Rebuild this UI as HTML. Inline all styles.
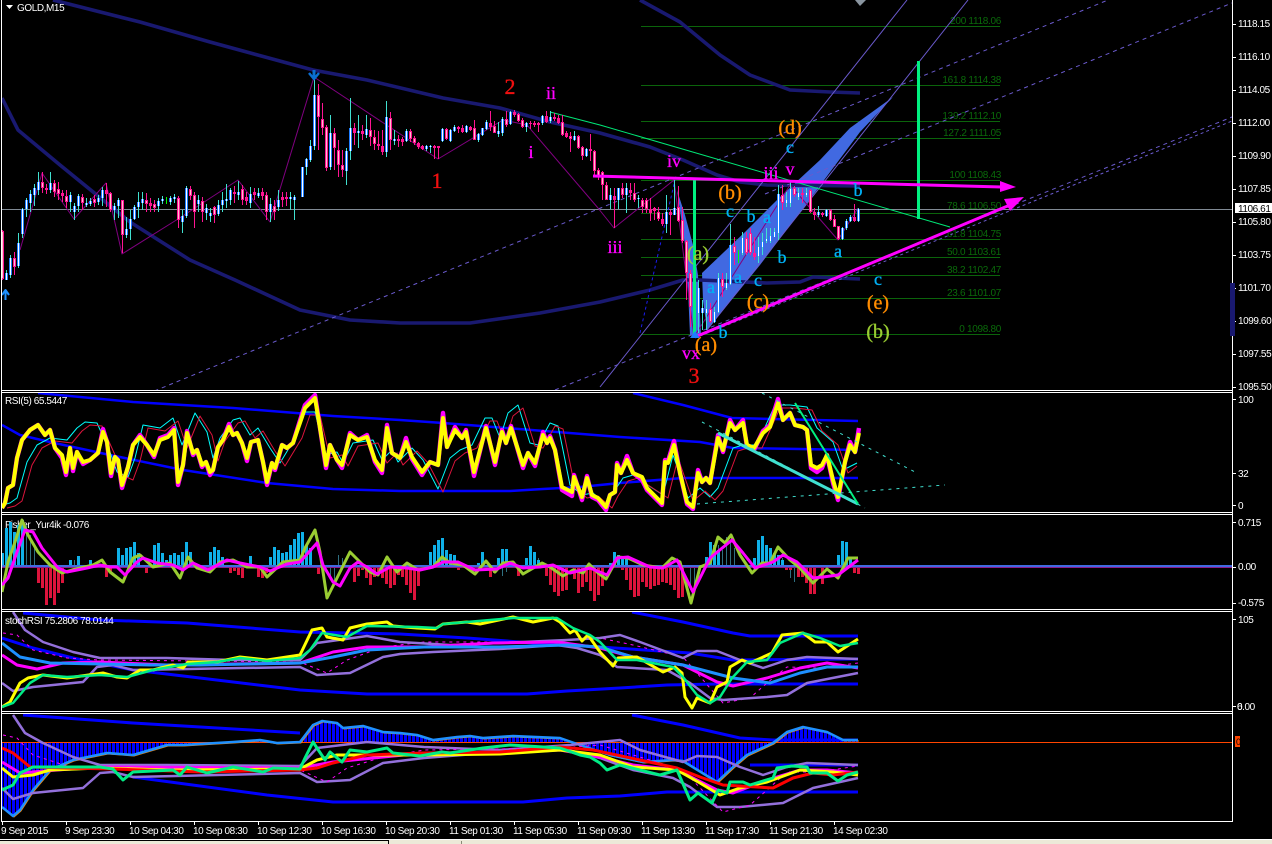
<!DOCTYPE html>
<html><head><meta charset="utf-8"><title>GOLD,M15</title>
<style>
html,body{margin:0;padding:0;background:#000;width:1272px;height:844px;overflow:hidden}
svg{display:block}
text{font-family:"Liberation Sans",sans-serif}
.ax text,.t{font-size:10px;letter-spacing:-.42px;fill:#fff}
.fib text{font-size:10px;letter-spacing:-.3px;fill:#0a6a0a;text-anchor:end}
.l text{font-family:"Liberation Serif",serif;text-anchor:middle;font-size:18px;stroke-width:.35px}
.p text{font-size:20px}
polyline,path{fill:none;stroke-linejoin:round}
</style></head><body>
<svg width="1272" height="844" viewBox="0 0 1272 844" xmlns="http://www.w3.org/2000/svg">
<defs>
<pattern id="h" width="4" height="10" patternUnits="userSpaceOnUse" x="0"><rect width="3" height="10" fill="#0000ff"/></pattern>
<clipPath id="c0"><rect x="2" y="0" width="1230" height="390"/></clipPath>
<clipPath id="c1"><rect x="2" y="393" width="1230" height="119"/></clipPath>
<clipPath id="c2"><rect x="2" y="515" width="1230" height="94"/></clipPath>
<clipPath id="c3"><rect x="2" y="612" width="1230" height="99"/></clipPath>
<clipPath id="c4"><rect x="2" y="714" width="1230" height="107"/></clipPath>
<path id="bu" d="M6.5 273V280M10.5 258V275M18.5 243V266M22.5 209V234M26.5 200V209M30.5 194V203M34.5 188V195M38.5 182V190M50.5 183V190M70.5 195V202M74.5 206V212M78.5 196V206M86.5 203V205M90.5 201V204M98.5 198V202M102.5 190V198M114.5 206V210M118.5 200V206M126.5 229V235M130.5 219V229M134.5 207V219M138.5 202V207M142.5 199V203M158.5 201V206M162.5 199V201M170.5 198V202M174.5 197V199M182.5 216V222M186.5 188V216M198.5 200V204M206.5 208V213M210.5 213V216M218.5 205V214M222.5 200V205M226.5 199V201M230.5 190V200M238.5 192V195M250.5 194V203M258.5 193V196M270.5 204V212M278.5 200V207M290.5 197V199M294.5 197V200M302.5 167V197M306.5 159V167M310.5 146V160M314.5 95V146M330.5 133V167M346.5 151V171M350.5 128V151M358.5 131V133M366.5 129V135M386.5 117V152M394.5 139V141M406.5 131V141M426.5 146V149M430.5 146V147M442.5 129V141M450.5 130V141M454.5 127V131M466.5 126V132M478.5 134V140M482.5 128V135M486.5 122V129M498.5 131V134M502.5 119V133M510.5 112V124M526.5 123V127M542.5 116V123M550.5 117V121M574.5 136V140M586.5 149V156M610.5 195V200M618.5 188V200M626.5 188V195M638.5 198V199M666.5 212V224M674.5 208V215M698.5 288V313M702.5 308V313M706.5 309V313M714.5 312V322M718.5 278V312M726.5 283V288M730.5 245V284M742.5 238V253M758.5 247V256M762.5 242V247M766.5 239V241M770.5 236V241M774.5 232V237M778.5 194V233M786.5 200V203M790.5 189V203M798.5 193V197M806.5 193V195M818.5 212V215M826.5 210V216M842.5 228V239M846.5 221V228M850.5 217V221M858.5 209V221"/>
</defs>
<rect width="1272" height="844" fill="#000"/>

<!-- MAIN -->
<g clip-path="url(#c0)">
<line x1="1" y1="209.5" x2="1232" y2="209.5" stroke="#808a94"/>
<g stroke="#0b640b" stroke-width="1" shape-rendering="crispEdges">
<path d="M641 26.5H1000M641 85.5H1000M641 121.5H1000M641 138.5H1000M641 180.5H1000M641 213.5H1000M641 239.5H1000M641 257.5H1000M641 275.5H1000M641 298.5H1000M641 334.5H1000"/>
</g>
<g class="fib">
<text x="1001" y="24">200 1118.06</text><text x="1001" y="83">161.8 1114.38</text><text x="1001" y="119">139.2 1112.10</text><text x="1001" y="136">127.2 1111.05</text><text x="1001" y="178">100 1108.43</text><text x="1001" y="209">78.6 1106.50</text><text x="1001" y="237">61.8 1104.75</text><text x="1001" y="255">50.0 1103.61</text><text x="1001" y="273">38.2 1102.47</text><text x="1001" y="296">23.6 1101.07</text><text x="1001" y="332">0 1098.80</text>
</g>
<polygon points="702,273 745,232 780,197 820,160 850,128 893,97 860,132 813,195 760,265 707,330 703,300" fill="#4169e1"/>
<polygon points="677,190 685,215 693,245 698,275 701,335 690,335 688,290 685,245" fill="#4169e1"/>
<!-- navy -->
<g stroke="#191970" stroke-width="3.6">
<polyline points="53,0 140,22 210,42 313,70 367,80 443,98 500,108 550,122 600,133 650,147 683,160 717,175 740,182 767,185 860,186"/>
<polyline points="2,98 18,130 60,165 130,222 190,260 235,280 300,310 350,320 400,323 470,323 540,313 600,302 650,290 683,280 700,280 767,283 800,282 813,277 860,279"/>
<polyline points="640,0 680,22 720,55 750,75 790,90 830,92 860,93"/>
</g>
<!-- dashed trend -->
<g stroke="#6a5acd" stroke-width="1">
<line x1="147" y1="394" x2="1108" y2="0" stroke-dasharray="4 4"/>
<line x1="765" y1="194" x2="1232" y2="3" stroke-dasharray="4 4"/>
<line x1="555" y1="390" x2="1232" y2="117" stroke-dasharray="4 4"/>
<line x1="700" y1="336" x2="1232" y2="121" stroke-dasharray="3 3"/>
<line x1="600" y1="387" x2="907" y2="0"/>
<line x1="707" y1="330" x2="968" y2="0"/>
</g>
<line x1="640" y1="333" x2="675" y2="180" stroke="#1c1cf0" stroke-dasharray="3 3"/>
<!-- zigzag -->
<polyline stroke="#800080" points="20,250 42,173 74,219 106,183 122,254 178,219 238,180 270,222 314,77 438,159 503,120 527,125 598,208 614,228 674,180 694,337 790,185 838,240 858,208"/>
<polyline stroke="#00e676" points="550,112 600,125 950,227"/>
<!-- candles -->
<g shape-rendering="crispEdges">
<path stroke="#40e0d0" d="M6.5 270V280M10.5 255V278M18.5 233V268M22.5 208V238M26.5 198V217M30.5 190V212M34.5 184V206M38.5 172V195M50.5 172V193M70.5 192V212M74.5 203V220M78.5 194V212M86.5 198V207M90.5 198V206M98.5 195V205M102.5 187V206M114.5 203V220M118.5 198V218M126.5 217V238M130.5 210V240M134.5 205V220M138.5 192V218M142.5 192V210M158.5 198V212M162.5 196V204M170.5 196V205M174.5 194V203M182.5 210V233M186.5 186V218M198.5 195V212M206.5 204V220M210.5 208V222M218.5 200V216M222.5 192V212M226.5 184V208M230.5 188V205M238.5 181V200M250.5 187V208M258.5 188V198M270.5 198V222M278.5 190V211M290.5 192V210M294.5 195V220M302.5 167V197M306.5 158V175M310.5 140V162M314.5 75V150M330.5 115V170M346.5 148V185M350.5 98V160M358.5 115V148M366.5 115V138M386.5 101V157M394.5 130V145M406.5 129V142M426.5 145V151M430.5 145V153M442.5 128V142M450.5 129V142M454.5 125V132M466.5 125V133M478.5 133V142M482.5 128V136M486.5 120V130M498.5 122V137M502.5 117V136M510.5 111V125M526.5 122V132M542.5 115V125M550.5 111V123M574.5 131V141M586.5 148V157M610.5 188V209M618.5 188V209M626.5 183V213M638.5 195V208M666.5 195V233M674.5 180V215M698.5 280V333M702.5 300V330M706.5 300V330M714.5 307V323M718.5 273V313M726.5 273V290M730.5 224V285M742.5 232V255M758.5 237V263M762.5 233V255M766.5 228V243M770.5 228V243M774.5 228V237M778.5 185V240M786.5 192V207M790.5 180V207M798.5 188V200M806.5 188V197M818.5 206V217M826.5 209V217M842.5 227V240M846.5 219V230M850.5 215V222M858.5 208V222"/>
<path stroke="#ff1493" d="M2.5 230V280M14.5 252V275M42.5 172V193M46.5 184V194M54.5 180V197M58.5 182V200M62.5 190V202M66.5 190V208M82.5 194V210M94.5 195V207M106.5 183V207M110.5 192V212M122.5 200V253M146.5 193V212M150.5 198V212M154.5 200V212M178.5 196V228M190.5 186V200M194.5 192V228M202.5 197V222M214.5 206V223M234.5 186V203M242.5 185V205M246.5 192V205M254.5 188V200M262.5 188V200M266.5 192V220M274.5 200V220M282.5 192V207M286.5 192V206M318.5 84V150M322.5 103V135M326.5 125V171M334.5 128V170M338.5 140V177M342.5 150V177M354.5 123V145M362.5 125V140M370.5 118V146M374.5 130V150M378.5 131V150M382.5 130V155M390.5 112V150M398.5 135V147M402.5 137V146M410.5 129V142M414.5 136V145M418.5 142V149M422.5 145V150M434.5 145V159M438.5 146V159M446.5 128V140M458.5 126V133M462.5 125V133M470.5 126V131M474.5 120V140M490.5 111V131M494.5 121V133M506.5 111V127M514.5 110V117M518.5 113V122M522.5 118V128M530.5 121V129M534.5 121V127M538.5 122V132M546.5 111V123M554.5 113V121M558.5 115V124M562.5 115V136M566.5 131V138M570.5 132V152M578.5 135V149M582.5 146V160M590.5 134V161M594.5 150V175M598.5 168V180M602.5 171V200M606.5 182V200M614.5 188V228M622.5 183V198M630.5 183V200M634.5 183V202M642.5 198V213M646.5 198V213M650.5 198V221M654.5 207V220M658.5 207V221M662.5 213V226M670.5 210V235M678.5 186V222M682.5 207V243M686.5 240V300M690.5 270V327M694.5 283V337M710.5 303V323M722.5 273V297M734.5 237V265M746.5 232V255M750.5 228V255M754.5 237V260M782.5 185V210M794.5 186V197M802.5 188V203M810.5 189V213M814.5 208V220M822.5 212V217M830.5 209V221M834.5 215V227M838.5 226V240M854.5 204V222"/>
<path stroke="#00ff00" d="M166.5 197V204M738.5 250V263"/>
<use href="#bu" stroke="#1e7dff" stroke-width="3"/>
<use href="#bu" stroke="#ffffff" stroke-width="1"/>
<path stroke="#ff1493" stroke-width="3" d="M2.5 231V279M14.5 258V267M42.5 182V188M46.5 188V190M54.5 183V192M58.5 189V194M62.5 193V196M66.5 196V202M82.5 197V203M94.5 199V203M106.5 190V194M110.5 193V210M122.5 200V235M146.5 200V204M150.5 203V206M154.5 204V208M178.5 198V220M190.5 189V196M194.5 195V212M202.5 201V212M214.5 207V215M234.5 192V194M242.5 189V200M246.5 197V201M254.5 192V195M262.5 192V196M266.5 195V212M274.5 206V212M282.5 197V200M286.5 197V199M318.5 95V117M322.5 119V128M326.5 127V168M334.5 133V148M338.5 150V165M342.5 165V170M354.5 128V133M362.5 131V134M370.5 130V137M374.5 137V144M378.5 144V146M382.5 146V152M390.5 118V140M398.5 139V141M402.5 139V142M410.5 131V139M414.5 138V143M418.5 143V147M422.5 146V149M434.5 146V148M438.5 146V148M446.5 129V139M458.5 127V129M462.5 128V132M470.5 127V130M474.5 128V140M490.5 123V127M494.5 126V133M506.5 119V125M514.5 112V115M518.5 114V121M522.5 120V127M530.5 123V124M534.5 123V125M538.5 123V125M546.5 116V122M554.5 117V119M558.5 118V123M562.5 122V135M566.5 133V137M570.5 136V139M578.5 136V148M582.5 147V156M590.5 149V151M594.5 151V171M598.5 170V177M602.5 172V185M606.5 185V200M614.5 196V200M622.5 188V195M630.5 190V193M634.5 193V200M642.5 200V207M646.5 200V209M650.5 209V213M654.5 208V211M658.5 212V219M662.5 219V224M670.5 212V215M678.5 207V221M682.5 220V241M686.5 241V273M690.5 273V307M694.5 307V313M710.5 309V322M722.5 279V287M734.5 246V253M746.5 238V253M750.5 233V253M754.5 253V257M782.5 195V203M794.5 188V195M802.5 193V195M810.5 190V212M814.5 212V215M822.5 213V215M830.5 210V220M834.5 219V227M838.5 226V239M854.5 217V221"/>
<path stroke="#ffc0cb" stroke-width="1" d="M2.5 232V278M14.5 259V266M42.5 183V187M54.5 184V191M58.5 190V193M66.5 197V201M82.5 198V202M94.5 200V202M110.5 194V209M122.5 201V234M146.5 201V203M154.5 205V207M178.5 199V219M190.5 190V195M194.5 196V211M202.5 202V211M214.5 208V214M242.5 190V199M266.5 196V211M274.5 207V211M318.5 96V116M322.5 120V127M326.5 128V167M334.5 134V147M338.5 151V164M342.5 166V169M370.5 131V136M374.5 138V143M390.5 119V139M410.5 132V138M414.5 139V142M446.5 130V138M474.5 129V139M494.5 127V132M506.5 120V124M518.5 115V120M522.5 121V126M562.5 123V134M570.5 137V138M578.5 137V147M582.5 148V155M594.5 152V170M598.5 171V176M602.5 173V184M606.5 186V199M622.5 189V194M634.5 194V199M642.5 201V206M646.5 201V208M658.5 213V218M678.5 208V220M682.5 221V240M686.5 242V272M690.5 274V306M710.5 310V321M722.5 280V286M734.5 247V252M746.5 239V252M750.5 234V252M782.5 196V202M794.5 189V194M810.5 191V211M830.5 211V219M834.5 220V226M838.5 227V238"/>
</g>
<!-- green bars & magenta arrows -->
<g stroke="#00f080" stroke-width="3"><line x1="694.5" y1="180" x2="694.5" y2="335"/><line x1="918.5" y1="61" x2="918.5" y2="219"/></g>
<g stroke="#ff00ff" stroke-width="3"><line x1="593" y1="176" x2="1002" y2="187"/><line x1="695" y1="337" x2="1010" y2="205"/></g>
<polygon points="1000,181 1016,187 1000,192" fill="#ff00ff"/>
<polygon points="1004,199 1024,197 1010,211" fill="#ff00ff"/>
<polygon points="855,0 866,0 860,6" fill="#8a95a0"/>
<!-- arrows -->
<path d="M314 70V79" stroke="#0a6ed1" stroke-width="3"/><path d="M309 73L314 79L319 73" stroke="#0a6ed1" stroke-width="2.5"/>
<path d="M5.5 300V290M2 295L5.5 290L9 295" stroke="#1e90ff" stroke-width="2"/>
<polygon points="690,338 695,331 700,338" fill="#1e7dff"/>
</g>
<!-- wave labels -->
<g class="l">
<g fill="#f01010" stroke="#f01010"><text x="437" y="188" style="font-size:22px">1</text><text x="510" y="94" style="font-size:22px">2</text><text x="694" y="383" style="font-size:22px">3</text></g>
<g fill="#ff00ff" stroke="#ff00ff"><text x="531" y="158">i</text><text x="551" y="99">ii</text><text x="615" y="253">iii</text><text x="674" y="167">iv</text><text x="790" y="175">v</text><text x="771" y="179">iii</text><text x="691" y="359">vx</text></g>
<g fill="#00b0f5" stroke="#00b0f5"><text x="790" y="153">c</text><text x="858" y="196">b</text><text x="838" y="257">a</text><text x="878" y="285">c</text><text x="782" y="263">b</text><text x="758" y="286">c</text><text x="767" y="223">a</text><text x="751" y="222">b</text><text x="730" y="217">c</text><text x="738" y="283">a</text><text x="711" y="293">a</text><text x="723" y="338">b</text></g>
<g fill="#ff8c00" stroke="#ff8c00" class="p"><text x="790" y="134">(d)</text><text x="730" y="199">(b)</text><text x="758" y="308">(c)</text><text x="878" y="309">(e)</text><text x="706" y="351">(a)</text></g>
<g fill="#9acd32" stroke="#9acd32" class="p"><text x="698" y="260">(a)</text><text x="878" y="338">(b)</text></g>
</g>
<polygon points="6,5 13,5 9.5,9" fill="#fff"/>
<text x="17" y="11" class="t">GOLD,M15</text>

<!-- RSI -->
<g clip-path="url(#c1)">
<g stroke="#0000ff" stroke-width="2.5">
<polyline points="38,393 133,402 233,408 333,416 400,420 443,423 620,437 700,442 733,448 800,449 858,450"/>
<polyline points="633,393 683,405 732,418 858,421"/>
<polyline points="2,425 20,435 50,442 110,455 183,470 267,483 333,489 400,491 510,491 543,489 580,487 620,483 683,478 858,478"/>
</g>
<polyline stroke="#00ffff" points="2,505 10,503 17,498 27,462 37,445 50,438 67,440 77,428 85,422 97,423 110,452 117,472 128,477 135,458 143,425 160,428 173,418 182,445 195,413 207,432 213,458 220,438 233,420 240,418 250,435 258,428 270,448 280,463 297,435 305,412 315,412 325,455 337,452 343,463 353,443 373,440 382,460 392,450 398,462 412,448 423,460 438,489 450,458 460,450 472,445 485,418 492,418 500,438 508,413 518,405 530,443 538,445 550,423 558,426 563,450 570,485 582,495 593,493 607,505 613,493 623,478 633,475 643,482 663,495 673,455 688,498 700,488 710,497 718,488 733,448 743,445 757,445 775,405 790,405 807,407 817,428 833,442 843,470 857,463"/>
<polyline stroke="#dc143c" transform="translate(5,3)" points="2,505 10,503 17,498 27,462 37,445 50,438 67,440 77,428 85,422 97,423 110,452 117,472 128,477 135,458 143,425 160,428 173,418 182,445 195,413 207,432 213,458 220,438 233,420 240,418 250,435 258,428 270,448 280,463 297,435 305,412 315,412 325,455 337,452 343,463 353,443 373,440 382,460 392,450 398,462 412,448 423,460 438,489 450,458 460,450 472,445 485,418 492,418 500,438 508,413 518,405 530,443 538,445 550,423 558,426 563,450 570,485 582,495 593,493 607,505 613,493 623,478 633,475 643,482 663,495 673,455 688,498 700,488 710,497 718,488 733,448 743,445 757,445 775,405 790,405 807,407 817,428 833,442 843,470 852,463"/>
<polyline stroke="#ff00ff" stroke-width="4.4" points="2,508 5,503 8,488 13,485 17,458 22,440 30,430 38,425 45,435 50,430 55,448 62,458 66,475 70,448 73,471 77,452 83,464 90,460 98,453 103,429 107,442 111,476 115,457 118,460 122,488 128,467 133,445 140,435 147,445 154,457 160,438 168,435 174,428 178,485 183,465 187,431 193,455 197,450 202,467 206,462 210,475 213,470 218,447 223,440 229,424 233,435 237,433 242,443 247,461 251,442 258,440 263,462 267,485 272,463 275,470 282,445 287,448 293,443 302,414 305,405 315,395 320,428 326,468 330,445 337,460 342,468 350,433 358,440 367,435 375,462 382,473 387,425 392,453 400,458 406,438 412,459 422,475 430,462 438,465 443,413 447,447 455,427 462,438 466,430 474,476 486,426 495,465 502,430 506,443 511,426 523,468 528,453 535,466 543,432 547,443 550,436 555,450 562,490 572,496 574,475 582,500 587,476 592,497 598,500 606,510 610,495 615,492 617,463 621,473 627,456 633,473 642,480 647,490 662,505 665,460 668,461 674,441 680,473 687,504 693,509 698,470 702,482 706,478 710,483 718,435 723,452 730,420 735,430 743,420 747,447 754,450 763,431 770,425 778,399 783,420 790,413 795,425 803,427 807,430 811,468 817,472 822,468 827,455 833,483 838,500 845,462 850,442 855,452 859,428"/>
<polyline stroke="#ffff00" stroke-width="4" points="2,508 5,503 8,488 13,485 17,458 22,440 30,430 38,425 45,435 50,430 55,448 62,455 66,472 70,448 73,468 77,452 83,462 90,460 98,453 103,432 107,442 111,473 115,457 118,460 122,485 128,467 133,445 140,437 147,445 154,455 160,440 168,437 174,430 178,482 183,465 187,433 193,453 197,450 202,465 206,462 210,472 213,470 218,447 223,440 229,427 233,435 237,433 242,443 247,458 251,442 258,440 263,462 267,482 272,463 275,468 282,445 287,448 293,443 302,417 305,408 315,398 320,428 326,465 330,445 337,460 342,465 350,435 358,440 367,437 375,460 382,470 387,428 392,453 400,458 406,442 412,457 422,472 430,462 438,465 443,418 447,447 455,430 462,438 466,432 474,472 486,428 495,462 502,432 506,443 511,428 523,465 528,453 535,463 543,435 547,443 550,438 555,450 562,487 572,492 574,477 582,497 587,478 592,495 598,498 606,507 610,495 615,492 617,465 621,473 627,460 633,473 642,477 647,488 662,503 665,462 668,463 674,445 680,473 687,502 693,507 698,473 702,482 706,478 710,483 718,438 723,450 730,423 735,430 743,423 747,445 754,448 763,433 770,427 778,403 783,420 790,413 795,425 803,427 807,430 811,465 817,468 822,465 827,455 833,480 838,497 845,462 850,445 855,452 859,433"/>
<line x1="718" y1="433" x2="858" y2="504" stroke="#40e0d0" stroke-width="3"/>
<line x1="795" y1="403" x2="858" y2="504" stroke="#00f080" stroke-width="2"/>
<g stroke="#40e0d0" stroke-dasharray="3 5"><line x1="702" y1="422" x2="865" y2="508"/><line x1="762" y1="393" x2="917" y2="473"/><line x1="697" y1="504" x2="945" y2="485"/></g>
<text x="5" y="404" class="t">RSI(5) 65.5447</text>
</g>

<!-- FISHER -->
<g clip-path="url(#c2)">
<text x="5" y="528" class="t">Fisher_Yur4ik -0.076</text>
<path stroke="#2f6f80" d="M26.5 566V525M30.5 566V535M34.5 566V548M74.5 566V560M338.5 566V555M342.5 566V558M530.5 566V555M534.5 566V552M538.5 566V558M718.5 566V545M722.5 566V550M726.5 566V537M730.5 566V540M734.5 566V548M782.5 566V558M790.5 566V578M794.5 566V582M330.5 566V580M334.5 566V585M690.5 566V590M694.5 566V585M698.5 566V578M502.5 566V576M506.5 566V572M610.5 566V572"/>
<path stroke="#0fb0e8" stroke-width="3" shape-rendering="crispEdges" d="M2.5 566V553M6.5 566V528M10.5 566V522M14.5 566V532M18.5 566V525M22.5 566V520M70.5 566V560M78.5 566V556M90.5 566V560M118.5 566V548M122.5 566V555M126.5 566V548M130.5 566V547M134.5 566V542M138.5 566V553M154.5 566V545M158.5 566V543M162.5 566V553M166.5 566V560M170.5 566V555M174.5 566V553M178.5 566V555M182.5 566V552M186.5 566V542M190.5 566V552M210.5 566V552M214.5 566V547M218.5 566V550M222.5 566V557M250.5 566V556M270.5 566V557M274.5 566V547M278.5 566V550M282.5 566V553M286.5 566V552M290.5 566V545M294.5 566V539M298.5 566V533M302.5 566V532M306.5 566V545M310.5 566V548M430.5 566V552M434.5 566V545M438.5 566V540M442.5 566V538M446.5 566V550M450.5 566V554M454.5 566V555M478.5 566V563M482.5 566V552M498.5 566V558M502.5 566V549M506.5 566V549M526.5 566V558M530.5 566V546M534.5 566V552M538.5 566V560M610.5 566V563M614.5 566V552M618.5 566V555M622.5 566V557M626.5 566V558M706.5 566V557M710.5 566V542M714.5 566V545M718.5 566V550M754.5 566V558M758.5 566V540M762.5 566V536M766.5 566V545M770.5 566V548M774.5 566V553M778.5 566V555M782.5 566V560M838.5 566V555M842.5 566V541M846.5 566V542M850.5 566V558"/>
<path stroke="#dc143c" stroke-width="3" shape-rendering="crispEdges" d="M38.5 567V583M42.5 567V588M46.5 567V605M50.5 567V598M54.5 567V605M58.5 567V593M62.5 567V583M106.5 567V577M110.5 567V572M146.5 567V573M230.5 567V573M234.5 567V571M238.5 567V575M242.5 567V578M258.5 567V577M262.5 567V578M266.5 567V573M318.5 567V574M354.5 567V582M358.5 567V576M362.5 567V570M366.5 567V578M370.5 567V585M374.5 567V577M378.5 567V573M382.5 567V578M386.5 567V584M390.5 567V588M394.5 567V585M398.5 567V575M402.5 567V577M406.5 567V585M410.5 567V593M414.5 567V600M418.5 567V586M458.5 567V570M490.5 567V577M494.5 567V573M518.5 567V576M546.5 567V576M550.5 567V585M554.5 567V592M558.5 567V596M562.5 567V591M566.5 567V590M574.5 567V579M578.5 567V593M582.5 567V587M586.5 567V582M590.5 567V591M594.5 567V601M598.5 567V595M602.5 567V586M622.5 567V570M626.5 567V580M630.5 567V590M634.5 567V597M638.5 567V596M642.5 567V582M646.5 567V587M650.5 567V589M654.5 567V586M658.5 567V585M662.5 567V582M666.5 567V583M670.5 567V585M674.5 567V590M678.5 567V598M682.5 567V597M786.5 567V570M790.5 567V570M798.5 567V577M802.5 567V577M806.5 567V583M810.5 567V594M814.5 567V594M822.5 567V584M854.5 567V573M858.5 567V574"/>
<rect x="2" y="565" width="1230" height="2" fill="#4169e1"/>
<rect x="2" y="567" width="1230" height="1" fill="#8b1a8b"/>
<polyline stroke="#9acd32" stroke-width="3" points="2,592 8,562 15,542 22,520 28,535 38,552 50,565 62,573 72,570 93,565 102,560 110,572 123,582 133,558 140,555 153,567 170,563 180,578 188,557 197,568 210,572 220,562 233,560 247,567 260,567 267,577 283,562 300,560 305,548 315,530 320,552 327,598 337,578 350,552 360,562 370,572 378,575 387,557 397,572 407,563 418,570 433,567 442,557 450,563 463,565 475,574 486,561 495,572 503,563 513,562 523,574 542,563 550,567 563,576 573,570 583,573 589,564 597,572 606,579 618,557 628,558 643,565 662,568 672,558 680,562 691,603 700,567 710,563 718,537 725,543 731,535 740,555 752,573 762,563 770,563 778,547 790,560 800,568 813,583 827,569 838,578 848,558 858,558"/>
<polyline stroke="#ff00ff" stroke-width="3" points="2,585 8,578 17,552 25,530 33,532 42,548 58,568 67,572 87,568 100,565 110,567 117,567 125,575 137,562 143,558 157,563 173,565 183,570 193,563 208,570 227,560 240,563 260,567 270,571 287,564 300,562 317,543 323,565 333,582 340,586 350,568 358,562 367,567 377,574 390,567 407,568 420,570 433,567 443,562 458,562 475,570 497,569 510,563 523,568 540,567 553,565 570,573 590,568 607,575 617,558 628,557 650,567 663,568 677,560 693,592 710,558 732,540 743,553 755,568 773,562 783,555 797,562 813,578 823,577 838,575 858,560"/>
</g>

<!-- STOCH -->
<g clip-path="url(#c3)">
<g stroke="#0000ff" stroke-width="3">
<polyline points="23,613 100,620 187,623 300,632 400,634 467,638 533,643 600,647 690,653 733,660 858,659"/>
<polyline points="632,612 683,622 733,633 750,636 858,636"/>
<polyline points="2,638 33,648 73,658 133,670 200,678 300,690 367,694 527,694 567,691 620,688 667,685 717,684 858,684"/>
</g>
<polyline stroke="#ff00ff" stroke-dasharray="3 4" points="3,633 17,635 33,650 67,658 100,660 300,662 327,673 347,660 383,647 424,642 520,642 600,638 633,645 683,657 723,703 750,698 767,683 787,667 817,668 858,663"/>
<g stroke="#9370db" stroke-width="2.5">
<polyline points="13,612 25,630 43,642 73,652 100,658 167,658 233,660 300,660 317,643 367,636 400,642 450,645 500,643 567,640 600,638 620,635 640,642 683,658 697,651 717,651 740,660 763,668 787,660 807,657 858,659"/>
<polyline points="2,683 13,691 33,687 83,682 97,667 113,665 133,670 300,667 317,675 350,673 383,657 400,654 433,652 500,649 557,645 577,648 600,655 617,667 667,670 690,683 710,698 723,700 767,697 787,695 807,683 858,673"/>
</g>
<polyline stroke="#ff00ff" stroke-width="3" points="2,655 17,665 37,669 63,663 100,662 167,665 300,663 333,652 367,647 424,647 493,643 557,642 600,648 633,657 683,665 717,682 733,686 767,678 800,668 827,663 858,668"/>
<polyline stroke="#1e90ff" stroke-width="3" points="2,643 20,657 50,663 100,664 150,665 200,665 300,663 333,657 367,650 424,647 500,647 567,645 600,647 633,657 683,665 733,678 770,683 800,673 827,667 858,667"/>
<polyline stroke="#ffff00" stroke-width="3" points="2,707 10,702 20,683 28,678 43,675 67,678 103,673 117,677 127,678 140,670 153,670 173,665 183,668 188,662 217,662 240,657 267,660 300,655 312,630 322,628 327,637 343,640 350,628 367,624 387,622 393,626 417,628 435,629 443,624 467,622 480,624 513,617 533,622 553,618 560,622 570,633 575,630 582,641 588,635 600,652 613,666 618,658 637,657 663,672 675,667 682,673 685,697 692,708 697,698 710,703 717,687 727,682 730,667 742,660 750,663 772,653 782,635 803,633 815,642 827,642 838,652 858,639"/>
<polyline stroke="#00ec85" stroke-width="2.5" points="2,707 13,703 30,683 43,675 67,677 100,675 127,677 153,670 187,664 217,662 240,658 267,661 300,658 310,650 322,633 347,637 367,626 417,627 437,628 443,624 467,622 513,618 557,618 573,628 590,635 600,642 617,660 637,660 673,667 683,677 697,695 710,703 720,697 732,678 747,662 767,660 780,643 803,633 820,638 840,646 858,643"/>
<text x="5" y="624" class="t">stochRSI 75.2806 78.0144</text>
</g>

<!-- LAST PANEL -->
<g clip-path="url(#c4)">
<polygon fill="url(#h)" shape-rendering="crispEdges" points="2,742 2,807 13,816 20,810 33,790 50,770 73,760 107,753 133,755 167,745 183,745 233,742 260,740 277,743 300,742 313,725 322,721 337,723 343,728 363,726 383,732 400,733 417,735 433,740 457,737 470,736 483,738 513,736 560,738 580,745 610,755 643,762 673,760 683,761 717,782 733,767 747,755 773,743 787,732 803,727 827,732 843,740 858,740 858,742"/>
<g stroke="#0000ff" stroke-width="3">
<polyline points="23,715 133,723 300,733"/>
<polyline points="632,715 683,725 740,738 773,740 858,740"/>
<polyline points="133,777 267,795 333,802 400,802 523,802 567,798 620,796 667,792 858,792"/>
<polyline points="750,765 858,765"/>
</g>
<line x1="2" y1="742.5" x2="1232" y2="742.5" stroke="#ff4500"/>
<polyline stroke="#ff8c00" transform="translate(1,1)" points="2,807 13,816 20,810 33,790 50,770 73,760 107,753 133,755 167,745 183,745 233,742 260,740 277,743 300,742 313,725 322,721 337,723 343,728 363,726 383,732 400,733 417,735 433,740 457,737 470,736 483,738 513,736 560,738 580,745 610,755 643,762 673,760 683,761 717,782 733,767 747,755 773,743 787,732 803,727 827,732 843,740 858,740"/>
<polyline stroke="#1e90ff" stroke-width="2.5" points="2,807 13,816 20,810 33,790 50,770 73,760 107,753 133,755 167,745 183,745 233,742 260,740 277,743 300,742 313,725 322,721 337,723 343,728 363,726 383,732 400,733 417,735 433,740 457,737 470,736 483,738 513,736 560,738 580,745 610,755 643,762 673,760 683,761 717,782 733,767 747,755 773,743 787,732 803,727 827,732 843,740 858,740"/>
<g stroke="#9370db" stroke-width="2.5">
<polyline points="13,715 25,733 43,743 73,757 100,765 167,765 300,766 317,748 367,742 424,747 500,750 570,745 600,742 620,740 640,750 683,762 697,756 717,757 740,767 763,775 787,767 807,763 858,765"/>
<polyline points="2,788 13,799 33,793 83,788 100,773 113,772 133,777 300,773 317,782 350,780 383,763 424,758 500,752 560,748 600,758 633,770 673,778 690,787 717,807 740,807 783,803 813,788 858,778"/>
</g>
<polyline stroke="#ff00ff" stroke-dasharray="3 4" points="3,735 17,738 33,755 67,766 100,768 300,770 327,782 347,768 383,757 424,750 560,748 600,745 633,755 683,770 723,812 750,805 767,790 787,772 817,772 858,766"/>
<polyline stroke="#ff00ff" stroke-width="3" points="2,762 20,773 57,770 100,767 300,768 333,762 424,753 500,753 560,750 600,757 633,765 677,770 717,790 733,793 767,780 800,770 827,770 858,773"/>
<polyline stroke="#ffff00" stroke-width="3" points="2,768 13,777 33,775 50,770 100,768 167,770 300,769 317,760 337,755 424,755 500,754 560,750 600,755 633,767 677,770 700,783 720,795 740,788 767,782 800,770 833,772 858,775"/>
<polyline stroke="#ff0000" stroke-width="3" points="2,748 13,753 30,767 67,768 113,769 200,772 300,770 317,768 333,763 367,755 424,753 500,752 560,747 593,750 640,760 677,768 700,777 723,785 773,788 793,778 813,773 833,775 858,772"/>
<polyline stroke="#00ec85" stroke-width="3" points="2,790 13,785 20,773 33,767 60,767 100,767 113,769 123,780 133,772 173,770 180,775 187,767 207,773 233,767 263,772 273,768 300,769 305,758 313,742 325,760 330,752 342,762 350,750 367,752 387,748 393,753 420,756 442,752 450,753 483,748 510,745 560,748 580,755 590,757 600,763 607,770 620,765 660,775 677,770 690,800 698,793 712,803 718,790 727,793 730,782 743,782 750,785 773,778 777,768 792,766 807,767 810,773 827,773 838,781 847,775 858,772"/>
</g>

<!-- frame -->
<g stroke="#fff" shape-rendering="crispEdges">
<path d="M1.5 0V821M1232.5 0V821M1 390.5H1233M1 392.5H1233M1 512.5H1233M1 514.5H1233M1 609.5H1233M1 611.5H1233M1 711.5H1233M1 713.5H1233M1 821.5H1233M0 839.5H1272"/>
<path d="M1233 24.5h3M1233 57.5h3M1233 90.5h3M1233 123.5h3M1233 156.5h3M1233 189.5h3M1233 222.5h3M1233 255.5h3M1233 288.5h3M1233 321.5h3M1233 354.5h3M1233 387.5h3M1233 399.5h3M1233 473.5h3M1233 505.5h3M1233 522.5h3M1233 567.5h3M1233 603.5h3M1233 619.5h3M1233 706.5h3"/>
<path d="M2.5 822v3M66.5 822v3M130.5 822v3M194.5 822v3M258.5 822v3M322.5 822v3M386.5 822v3M450.5 822v3M514.5 822v3M578.5 822v3M642.5 822v3M706.5 822v3M770.5 822v3M834.5 822v3"/>
</g>
<rect x="1230" y="283" width="5" height="53" fill="#191970"/>
<g class="ax">
<text x="1238" y="27">1118.15</text><text x="1238" y="60">1116.10</text><text x="1238" y="93">1114.05</text><text x="1238" y="126">1112.00</text><text x="1238" y="159">1109.90</text><text x="1238" y="192">1107.85</text><text x="1238" y="225">1105.80</text><text x="1238" y="258">1103.75</text><text x="1238" y="291">1101.70</text><text x="1238" y="324">1099.60</text><text x="1238" y="357">1097.55</text><text x="1238" y="390">1095.50</text>
<text x="1238" y="403">100</text><text x="1238" y="477">32</text><text x="1238" y="509">0</text>
<text x="1238" y="526">0.715</text><text x="1238" y="570">0.00</text><text x="1238" y="606">-0.575</text>
<text x="1238" y="623">105</text><text x="1237" y="710">6.00</text><text x="1237" y="710">0</text>
<text x="1" y="834">9 Sep 2015</text><text x="65" y="834">9 Sep 23:30</text><text x="129" y="834">10 Sep 04:30</text><text x="193" y="834">10 Sep 08:30</text><text x="257" y="834">10 Sep 12:30</text><text x="321" y="834">10 Sep 16:30</text><text x="385" y="834">10 Sep 20:30</text><text x="449" y="834">11 Sep 01:30</text><text x="513" y="834">11 Sep 05:30</text><text x="577" y="834">11 Sep 09:30</text><text x="641" y="834">11 Sep 13:30</text><text x="705" y="834">11 Sep 17:30</text><text x="769" y="834">11 Sep 21:30</text><text x="833" y="834">14 Sep 02:30</text>
</g>
<rect x="1235" y="203" width="37" height="10" fill="#fff"/>
<text x="1238" y="212" font-size="10" letter-spacing="-.42" fill="#000">1106.61</text>
<rect x="1235" y="736" width="5" height="11" fill="#ff4500"/>
<text x="1236" y="745" font-size="9" fill="#000">0</text>
<rect x="0" y="840" width="1272" height="4" fill="#ece9d8"/>
<rect x="0" y="840" width="389" height="1" fill="#000"/>
<rect x="388" y="840" width="1" height="4" fill="#000"/>
<rect x="461" y="841" width="1" height="3" fill="#8a8a78"/>
</svg>
</body></html>
